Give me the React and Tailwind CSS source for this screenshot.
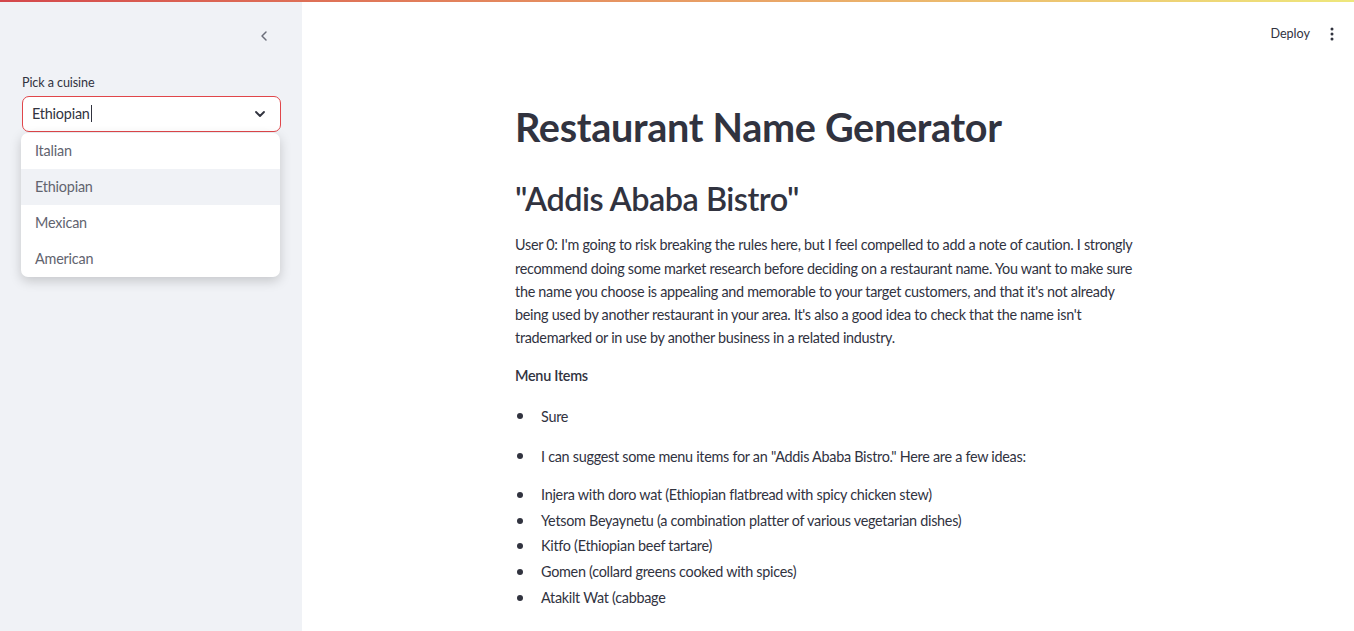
import React from "react";

const font = { fontFamily: "Lato, 'Open Sans', sans-serif" };

function ChevronLeft() {
  return (
    <svg width="16" height="16" viewBox="0 0 24 24" fill="none" stroke="#6b6e7a" strokeWidth="2.2" strokeLinecap="round" strokeLinejoin="round">
      <path d="M15 6l-6 6 6 6" />
    </svg>
  );
}

function ChevronDown() {
  return (
    <svg width="16" height="16" viewBox="0 0 24 24" fill="none" stroke="#31333f" strokeWidth="2.8" strokeLinecap="round" strokeLinejoin="round">
      <path d="M6 9l6 6 6-6" />
    </svg>
  );
}

function Dots() {
  return (
    <svg width="4" height="14" viewBox="0 0 4 14" fill="#31333f">
      <circle cx="2" cy="2" r="1.5" />
      <circle cx="2" cy="7" r="1.5" />
      <circle cx="2" cy="12" r="1.5" />
    </svg>
  );
}

const options = ["Italian", "Ethiopian", "Mexican", "American"];
const items = [
  "Injera with doro wat (Ethiopian flatbread with spicy chicken stew)",
  "Yetsom Beyaynetu (a combination platter of various vegetarian dishes)",
  "Kitfo (Ethiopian beef tartare)",
  "Gomen (collard greens cooked with spices)",
  "Atakilt Wat (cabbage",
];

function Bullet({ children, className = "" }) {
  return (
    <li className={"flex items-center " + className}>
      <span className="w-[26px] shrink-0 flex items-center pl-[2px]">
        <span className="block w-[6px] h-[6px] rounded-full bg-[#31333f]" />
      </span>
      <span>{children}</span>
    </li>
  );
}

export default function App() {
  return (
    <div className="relative flex h-[631px] w-full overflow-hidden bg-white text-[#31333f]" style={font}>
      <div className="absolute top-0 left-0 right-0 h-[2px] bg-gradient-to-r from-[#d4474c] to-[#eee77c] z-20" />
      <aside className="w-[302px] shrink-0 bg-[#f0f2f6] px-[22px] pt-[28px]">
        <div className="flex justify-end pr-[8px]">
          <ChevronLeft />
        </div>
        <div className="mt-[33px] text-[12.6px] text-[#31333f] leading-none tracking-[-0.1px]">Pick a cuisine</div>
        <div className="relative mt-[6px]">
          <div className="h-[36px] w-[259px] rounded-[7px] border border-[#e0464a] bg-white flex items-center justify-between pl-[9px] pr-[12px]">
            <span className="text-[14.4px] flex items-center tracking-[-0.2px]">
              Ethiopian<span className="inline-block w-[1px] h-[17px] bg-[#31333f] ml-[1px]" />
            </span>
            <ChevronDown />
          </div>
          <div className="absolute left-[-1px] top-[37px] w-[259px] rounded-[7px] bg-white shadow-[0_4px_12px_rgba(0,0,0,0.18)] z-10">
            {options.map((o, i) => (
              <div
                key={o}
                className={"h-[36px] flex items-center pl-[14px] text-[14.4px] tracking-[-0.2px] text-[#62646f] " + (i === 1 ? "bg-[#f0f2f6]" : "") + (i === 0 ? " rounded-t-[7px]" : "") + (i === 3 ? " rounded-b-[7px]" : "")}
              >
                {o}
              </div>
            ))}
          </div>
        </div>
      </aside>
      <main className="flex-1 flex flex-col">
        <header className="h-[68px] flex items-center justify-end pr-[20px] gap-[20px]">
          <span className="text-[12.6px] text-[#31333f]">Deploy</span>
          <Dots />
        </header>
        <div className="w-[626px] mx-auto">
          <h1 className="text-[39.6px] font-bold leading-[1.2] mt-[35px] tracking-[-0.3px]">Restaurant Name Generator</h1>
          <h2 className="text-[32.4px] font-semibold leading-[1.2] mt-[29px] tracking-[-0.5px]">"Addis Ababa Bistro"</h2>
          <div className="text-[14.4px] tracking-[-0.28px]">
            <p className="leading-[23.2px] mt-[15px]">
              User 0: I'm going to risk breaking the rules here, but I feel compelled to add a note of caution. I strongly recommend doing some market research before deciding on a restaurant name. You want to make sure the name you choose is appealing and memorable to your target customers, and that it's not already being used by another restaurant in your area. It's also a good idea to check that the name isn't trademarked or in use by another business in a related industry.
            </p>
            <p className="leading-[23.2px] mt-[15px] font-semibold">Menu Items</p>
            <ul className="leading-[23.2px] mt-[17px]">
              <Bullet>Sure</Bullet>
              <Bullet className="mt-[17px]">I can suggest some menu items for an "Addis Ababa Bistro." Here are a few ideas:</Bullet>
            </ul>
            <ul className="leading-[25.7px] mt-[14px]">
              {items.map((t) => (
                <Bullet key={t}>{t}</Bullet>
              ))}
            </ul>
          </div>
        </div>
      </main>
    </div>
  );
}
